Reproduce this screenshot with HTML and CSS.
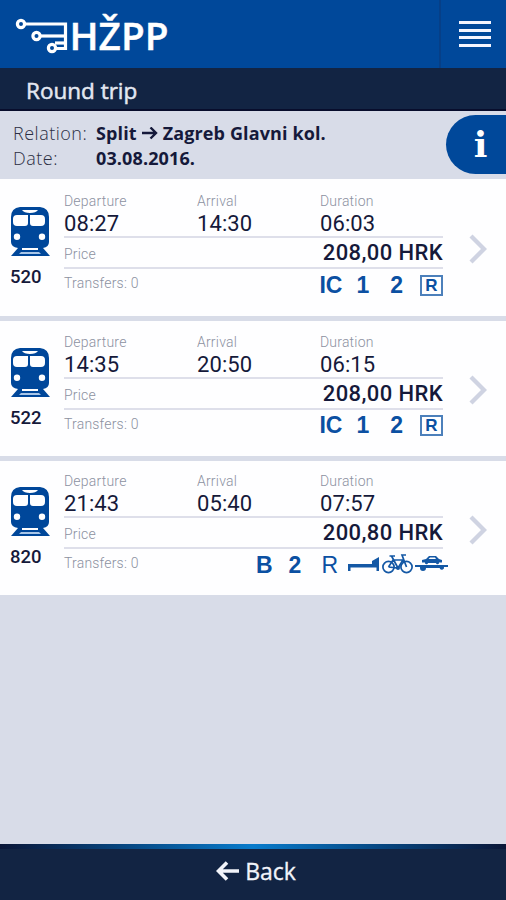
FILE: index.html
```html
<!DOCTYPE html>
<html lang="en">
<head>
<meta charset="utf-8">
<title>Round trip</title>
<link rel="stylesheet" href="styles.css">
</head>
<body>
<svg class="defs" width="0" height="0" aria-hidden="true">
  <symbol id="train" viewBox="0 0 40 50">
    <path fill="#00479a" fill-rule="evenodd" d="M10 0H30Q39 1 39 10V35Q39 40 33 41L40 49H1L8 41Q1 40 1 35V10Q1 1 10 0ZM12 3Q14 6 20 6Q26 6 28 3ZM7 8Q3 8 3 12V15Q3 19 7 19H15Q18 19 18 16V8ZM20 8V16Q20 19 23 19H31Q35 19 35 15V12Q35 8 31 8ZM7 26.500A3.200 3.200 0 1 0 7 32.900A3.200 3.200 0 1 0 7 26.500ZM32 26.500A3.200 3.200 0 1 0 32 32.900A3.200 3.200 0 1 0 32 26.500ZM12 41V43H28V41Z"/>
    <path fill="#a9c6e8" d="M11 45H29L31 47H9Z"/>
  </symbol>
  <symbol id="chevron" viewBox="0 0 18 30"><path d="M2 2L15 15L2 28" fill="none" stroke="#cfd3e2" stroke-width="4.3"/></symbol>
</svg>
<header class="top">
  <svg class="logo" width="180" height="50" viewBox="0 0 180 50" aria-label="HŽPP">
    <g fill="none" stroke="#fff" stroke-width="3.200">
      <circle cx="9" cy="13" r="3.6"/><path d="M13 13H53.500V37.500H44"/>
      <circle cx="24.500" cy="25" r="3.6"/><path d="M28 25H53"/>
      <circle cx="40" cy="37" r="3.6"/><path d="M43 32H53"/>
    </g>
    <text class="logo-text" x="57.500" y="38.500" textLength="99" lengthAdjust="spacingAndGlyphs">HŽPP</text>
  </svg>
  <div class="menu"><i></i><i></i><i></i><i></i></div>
</header>
<h1 class="title">Round trip</h1>
<section class="summary">
  <dl>
    <dt class="rel">Relation:</dt>
    <dd class="route"><span class="from">Split</span><svg width="16" height="14" viewBox="0 0 16 14"><path d="M0 6H14M8.500 .5L14 6L8.500 11.500" fill="none" stroke="#15193a" stroke-width="2.400"/></svg><span class="to">Zagreb Glavni kol.</span></dd>
    <dt class="dat">Date:</dt>
    <dd class="date">03.08.2016.</dd>
  </dl>
  <div class="info"><span>i</span></div>
</section>
<main>
  <article class="card first">
    <div class="train"><svg width="40" height="50"><use href="#train"/></svg><b>520</b></div>
    <div class="details">
      <div class="times">
        <div><small>Departure</small><span>08:27</span></div>
        <div><small>Arrival</small><span>14:30</span></div>
        <div><small>Duration</small><span>06:03</span></div>
      </div>
      <div class="price"><small>Price</small><strong>208,00 HRK</strong></div>
      <div class="transfers"><small>Transfers: 0</small>
        <div class="marks"><b class="ic">IC</b><b class="one">1</b><b class="two">2</b><b class="box">R</b></div>
      </div>
    </div>
    <svg class="chevron" width="18" height="30"><use href="#chevron"/></svg>
  </article>
  <article class="card second">
    <div class="train"><svg width="40" height="50"><use href="#train"/></svg><b>522</b></div>
    <div class="details">
      <div class="times">
        <div><small>Departure</small><span>14:35</span></div>
        <div><small>Arrival</small><span>20:50</span></div>
        <div><small>Duration</small><span>06:15</span></div>
      </div>
      <div class="price"><small>Price</small><strong>208,00 HRK</strong></div>
      <div class="transfers"><small>Transfers: 0</small>
        <div class="marks"><b class="ic">IC</b><b class="one">1</b><b class="two">2</b><b class="box">R</b></div>
      </div>
    </div>
    <svg class="chevron" width="18" height="30"><use href="#chevron"/></svg>
  </article>
  <article class="card third">
    <div class="train"><svg width="40" height="50"><use href="#train"/></svg><b>820</b></div>
    <div class="details">
      <div class="times">
        <div><small>Departure</small><span>21:43</span></div>
        <div><small>Arrival</small><span>05:40</span></div>
        <div><small>Duration</small><span>07:57</span></div>
      </div>
      <div class="price"><small>Price</small><strong>200,80 HRK</strong></div>
      <div class="transfers"><small>Transfers: 0</small>
        <div class="marks wide"><b class="b">B</b><b class="two">2</b><span class="r">R</span>
          <svg width="101" height="22" viewBox="0 0 101 22">
            <g fill="#1458a5">
              <path d="M0 11H24V8L31 4V18H28.500V14.500H2.500V18H0Z"/>
              <path d="M67 12H100V14H96A2.200 2.200 0 0 1 91.600 15H78A2.200 2.200 0 0 1 72 15V14H67Z"/>
              <path fill-rule="evenodd" d="M74 7L78 6L81 3H88L91 6L94 7V9.500H91A1.500 1.500 0 0 1 88 10H80A1.500 1.500 0 0 1 77 9.500H74ZM80.500 6H88L87 4.500H82Z"/>
            </g>
            <g fill="none" stroke="#1458a5" stroke-width="1.700">
              <circle cx="40.500" cy="14" r="5.600"/><circle cx="58.500" cy="14" r="5.600"/>
              <path d="M40.500 14L45 7H55L50 15L40.500 14M43.500 3L50 15M41.500 3H47M58.500 14L54 2H58"/>
            </g>
            <circle cx="50" cy="15" r="2" fill="#1458a5"/>
          </svg>
        </div>
      </div>
    </div>
    <svg class="chevron" width="18" height="30"><use href="#chevron"/></svg>
  </article>
</main>
<footer class="back">
  <svg width="24" height="20" viewBox="0 0 24 20"><path d="M2.500 10H23M11 1.500L2.500 10L11 18.500" fill="none" stroke="#f2f4fa" stroke-width="3.600"/></svg>
  <span>Back</span>
</footer>
</body>
</html>
```

FILE: styles.css
```css
* { box-sizing: border-box; }
body {
  margin: 0;
  height: 900px;
  display: flex;
  flex-direction: column;
  overflow: hidden;
  background: #d8dce8;
  color: #15193a;
  font-family: "Open Sans", sans-serif;
}
.defs { position: absolute; }
.top {
  height: 68px;
  flex: none;
  display: flex;
  justify-content: space-between;
  background: #00489a;
}
.logo { margin: 11px 0 0 12px; overflow: visible; }
.logo-text { font: 600 38px "Open Sans", sans-serif; fill: #fff; stroke: #fff; stroke-width: .4px; }
.menu {
  width: 67px;
  padding: 21px 15px 0 18px;
  border-left: 2px solid #063f87;
  display: flex;
  flex-direction: column;
  gap: 4.700px;
}
.menu i { height: 3px; background: #f4f5ff; }
.title {
  margin: 0;
  height: 43px;
  flex: none;
  padding-left: 26px;
  background: #122443;
  border-bottom: 2px solid #080d2c;
  color: #e3e7f1;
  font-size: 22.500px;
  font-weight: 500;
  line-height: 46px;
  letter-spacing: 0;
  -webkit-text-stroke: .5px #e3e7f1;
}
.summary {
  height: 68px;
  flex: none;
  display: flex;
  justify-content: space-between;
  padding: 4px 0 0 13px;
}
.summary dl {
  margin: 6px 0 0;
  display: grid;
  grid-template-columns: 83px auto;
  grid-template-rows: 25px 25px;
  font-size: 18px;
  line-height: 25px;
  letter-spacing: .12px;
  white-space: nowrap;
}
.summary dt { font-weight: 300; color: #2b2e43; letter-spacing: .5px; }
.summary dd { margin: 0; font-weight: 700; }
.route { display: flex; align-items: center; gap: 5px; }
.info {
  width: 60px;
  height: 59px;
  border-radius: 30px 0 0 30px;
  background: #00489a;
  color: #fff;
  text-align: center;
  font: 700 36px/58px "DejaVu Serif", serif;
  padding-left: 9px;
}
.card {
  display: flex;
  height: 134px;
  background: #fefeff;
  margin-bottom: 5px;
  font-family: Roboto, sans-serif;
}
.first { height: 137px; padding-top: 1px; }
.second { height: 135px; }
.third { margin: 0; }
.third .train, .third .details { position: relative; top: -1px; }
.train {
  width: 64px;
  padding: 27px 0 0 10px;
  display: flex;
  flex-direction: column;
}
.train b { font-size: 18.500px; font-weight: 500; line-height: 22px; margin-top: 9px; }
.details { width: 379px; padding-top: 12px; }
.times {
  height: 46px;
  border-bottom: 2px solid #dedfea;
  display: grid;
  grid-template-columns: 133px 123px 123px;
}
.times div { display: flex; flex-direction: column; }
.card small { font-size: 14px; line-height: 18px; color: #8c919f; font-weight: 300; letter-spacing: .2px; }
.times span { font-size: 22px; line-height: 27px; letter-spacing: .1px; font-weight: 400; }
.price {
  height: 31px;
  border-bottom: 2px solid #dedfea;
  display: flex;
  justify-content: space-between;
}
.price small { padding-top: 7px; }
.price strong { font-size: 22px; font-weight: 500; line-height: 29px; letter-spacing: .4px; }
.transfers { display: flex; justify-content: space-between; height: 34px; }
.transfers small { padding-top: 5px; }
.marks {
  display: flex;
  align-items: flex-start;
  padding-top: 4px;
  color: #0b50a2;
  font: 700 23px/24px "Liberation Sans", sans-serif;
}
.second .marks { padding-top: 3px; }
.marks .one { margin-left: 14px; }
.marks .two { margin-left: 21px; }
.marks .box {
  width: 23px;
  height: 21px;
  margin: 2px 0 0 17px;
  border: 2px solid #4c80bb;
  font-size: 17px;
  line-height: 18px;
  text-align: center;
}
.wide { margin-right: -6px; flex: none; }
.wide .two { margin-left: 16px; }
.wide .r { margin-left: 20px; font-weight: 400; }
.wide svg { margin: 0 0 0 10px; }
.chevron { margin: 54px 0 0 26px; }
.back {
  height: 56px;
  flex: none;
  margin-top: auto;
  display: flex;
  align-items: center;
  justify-content: center;
  gap: 5px;
  padding: 0 0 3px 6px;
  background: linear-gradient(90deg, #0b1738, #064782 25%, #087bcb 50%, #064782 75%, #0b1738) top / 100% 5px no-repeat #122443;
  color: #f2f4fa;
  font-size: 23px;
  font-weight: 500;
  line-height: 40px;
  -webkit-text-stroke: .3px #f2f4fa;
}
```
